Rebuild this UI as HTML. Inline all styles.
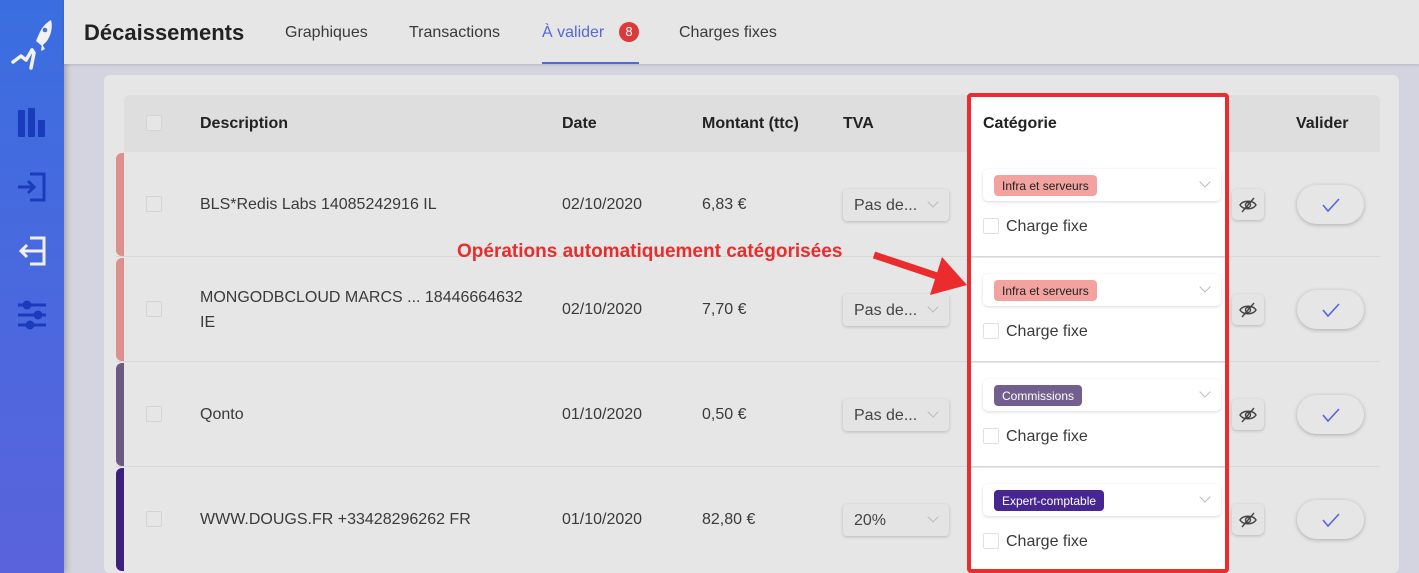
<!DOCTYPE html>
<html><head><meta charset="utf-8"><style>
*{box-sizing:border-box;margin:0;padding:0}
body{width:1419px;height:573px;overflow:hidden;background:#d3d4df;font-family:"Liberation Sans",sans-serif;position:relative;color:#333}
.a{position:absolute}
#side{left:0;top:0;width:64px;height:573px;background:linear-gradient(#3a6ee0,#5a63dc);box-shadow:2px 0 6px rgba(0,0,0,.25)}
#hdr{left:64px;top:0;width:1355px;height:64px;background:#e6e6e6;box-shadow:0 1px 3px rgba(0,0,0,.15)}
.tab{top:24px;font-size:16px;color:#3a3a3a}
#card{left:104px;top:75px;width:1295px;height:498px;background:#e6e6e6;border-radius:6px}
#thead{left:124px;top:95px;width:1256px;height:57px;background:#dedede;border-radius:6px 6px 0 0}
.th{top:115px;font-size:16px;font-weight:bold;color:#222}
.cb{width:16px;height:16px;border:1px solid #d4d4d4;background:#e6e6e6;border-radius:2px}
.row{left:116px;width:1264px;height:105px;border-bottom:1px solid #d8d8d8}
.bar{left:116px;width:8px;height:103px;border-radius:6px 0 0 6px}
.td{font-size:16px;color:#3a3a3a}
.sel{width:106px;height:32px;background:#e4e4e4;border-radius:4px;box-shadow:0 1px 3px rgba(0,0,0,.2);font-size:16px;padding:8px 0 0 11px;color:#444}
.chev{position:absolute;right:12px;top:9px;width:8px;height:8px;border-right:1px solid #bbb;border-bottom:1px solid #bbb;transform:rotate(45deg)}
.cat{left:983px;width:238px;height:32px;background:#fff;border-radius:5px;box-shadow:0 1px 3px rgba(0,0,0,.15)}
.chip{position:absolute;left:11px;top:6px;height:21px;border-radius:4px;font-size:12px;padding:4px 8px 0}
.eye{left:1232px;width:32px;height:31px;background:#e4e4e4;border-radius:5px;box-shadow:0 1px 3px rgba(0,0,0,.2)}
.ok{left:1297px;width:67px;height:39px;background:#e6e6e6;border-radius:20px;box-shadow:0 1px 4px rgba(0,0,0,.25)}
</style></head><body>
<div id="side" class="a">
<svg class="a" style="left:10px;top:18px" width="44" height="54" viewBox="0 0 44 54"><path d="M41 2c2 7 0 15-4 21l-5 5-6-5 3-7c3-7 7-11 12-14z" fill="#f2f2f2"/><circle cx="35" cy="12" r="2.3" fill="#4270e0"/><path d="M32 26l3 5-4 2z" fill="#f2f2f2"/><path d="M3 44l8-6 5 4 6-10" stroke="#f2f2f2" stroke-width="3.5" fill="none" stroke-linejoin="round" stroke-linecap="round"/><path d="M22 32l2 3-3 15" stroke="#f2f2f2" stroke-width="3.5" fill="none" stroke-linecap="round"/></svg>
<svg class="a" style="left:17px;top:108px" width="30" height="29"><rect x="1" y="2" width="7" height="27" rx="1" fill="#1a3cbc"/><rect x="11" y="0" width="7" height="29" rx="1" fill="#1a3cbc"/><rect x="21" y="12" width="7" height="17" rx="1" fill="#1a3cbc"/></svg>
<svg class="a" style="left:17px;top:172px" width="30" height="30" fill="none" stroke="#1a3cbc" stroke-width="3"><path d="M13 2h14v26H13M1 15h16M11 9l6 6-6 6"/></svg>
<svg class="a" style="left:17px;top:236px" width="30" height="30" fill="none" stroke="#f0f0f0" stroke-width="3"><path d="M13 2h14v26H13M26 15H5M10 9l-6 6 6 6"/></svg>
<svg class="a" style="left:17px;top:300px" width="30" height="30" stroke="#1a3cbc" stroke-width="3"><path d="M1 5h28M1 15h28M1 25h28"/><circle cx="10" cy="5" r="3" fill="#1a3cbc"/><circle cx="21" cy="15" r="3" fill="#1a3cbc"/><circle cx="13" cy="25" r="3" fill="#1a3cbc"/></svg>
</div>
<div id="hdr" class="a"></div>
<div class="a" style="left:84px;top:20px;font-size:22px;font-weight:bold;color:#222">Décaissements</div>
<div class="a tab" style="left:285px">Graphiques</div>
<div class="a tab" style="left:409px">Transactions</div>
<div class="a tab" style="left:542px;color:#5468d8">À valider</div>
<div class="a" style="left:619px;top:22px;width:20px;height:20px;border-radius:50%;background:#d93a3a;color:#fff;font-size:13px;text-align:center;line-height:20px">8</div>
<div class="a" style="left:542px;top:62px;width:97px;height:2px;background:#5468d8"></div>
<div class="a tab" style="left:679px">Charges fixes</div>
<div id="card" class="a"></div>
<div id="thead" class="a"></div>
<div class="a cb" style="left:146px;top:115px"></div>
<div class="a th" style="left:200px">Description</div>
<div class="a th" style="left:562px">Date</div>
<div class="a th" style="left:702px">Montant (ttc)</div>
<div class="a th" style="left:843px">TVA</div>
<div class="a th" style="left:1296px">Valider</div>
<div class="a" style="left:971px;top:97px;width:254px;height:473px;background:#fff"></div>
<div class="a th" style="left:983px">Catégorie</div>

<div class="a row" style="top:152px"></div><div class="a bar" style="top:153px;background:#dc8f8d"></div>
<div class="a row" style="top:257px"></div><div class="a bar" style="top:258px;background:#dc8f8d"></div>
<div class="a row" style="top:362px"></div><div class="a bar" style="top:363px;background:#6c5b80"></div>
<div class="a row" style="top:467px;border:none"></div><div class="a bar" style="top:468px;background:#3e1f7c"></div>
<div class="a" style="left:971px;top:257px;width:254px;height:1px;background:#e6e6e6"></div>
<div class="a" style="left:971px;top:362px;width:254px;height:1px;background:#e6e6e6"></div>
<div class="a" style="left:971px;top:467px;width:254px;height:1px;background:#e6e6e6"></div>

<div class="a cb" style="left:146px;top:196px"></div>
<div class="a td" style="left:200px;top:196px">BLS*Redis Labs 14085242916 IL</div>
<div class="a td" style="left:562px;top:196px">02/10/2020</div>
<div class="a td" style="left:702px;top:196px">6,83 €</div>
<div class="a sel" style="left:843px;top:189px">Pas de...<span class="chev"></span></div>

<div class="a cb" style="left:146px;top:301px"></div>
<div class="a td" style="left:200px;top:285px;line-height:25px">MONGODBCLOUD MARCS ... 18446664632<br>IE</div>
<div class="a td" style="left:562px;top:301px">02/10/2020</div>
<div class="a td" style="left:702px;top:301px">7,70 €</div>
<div class="a sel" style="left:843px;top:294px">Pas de...<span class="chev"></span></div>

<div class="a cb" style="left:146px;top:406px"></div>
<div class="a td" style="left:200px;top:406px">Qonto</div>
<div class="a td" style="left:562px;top:406px">01/10/2020</div>
<div class="a td" style="left:702px;top:406px">0,50 €</div>
<div class="a sel" style="left:843px;top:399px">Pas de...<span class="chev"></span></div>

<div class="a cb" style="left:146px;top:511px"></div>
<div class="a td" style="left:200px;top:511px">WWW.DOUGS.FR +33428296262 FR</div>
<div class="a td" style="left:562px;top:511px">01/10/2020</div>
<div class="a td" style="left:702px;top:511px">82,80 €</div>
<div class="a sel" style="left:843px;top:504px">20%<span class="chev"></span></div>

<div class="a cat" style="top:169px"><span class="chip" style="background:#f2a29f;color:#222">Infra et serveurs</span><span class="chev"></span></div>
<div class="a cat" style="top:274px"><span class="chip" style="background:#f2a29f;color:#222">Infra et serveurs</span><span class="chev"></span></div>
<div class="a cat" style="top:379px"><span class="chip" style="background:#735f8f;color:#fff">Commissions</span><span class="chev"></span></div>
<div class="a cat" style="top:484px"><span class="chip" style="background:#482692;color:#fff">Expert-comptable</span><span class="chev"></span></div>

<div class="a cb" style="left:983px;top:218px;background:#fff;border-color:#e0e0e0"></div><div class="a td" style="left:1006px;top:218px">Charge fixe</div>
<div class="a cb" style="left:983px;top:323px;background:#fff;border-color:#e0e0e0"></div><div class="a td" style="left:1006px;top:323px">Charge fixe</div>
<div class="a cb" style="left:983px;top:428px;background:#fff;border-color:#e0e0e0"></div><div class="a td" style="left:1006px;top:428px">Charge fixe</div>
<div class="a cb" style="left:983px;top:533px;background:#fff;border-color:#e0e0e0"></div><div class="a td" style="left:1006px;top:533px">Charge fixe</div>

<svg width="0" height="0" style="position:absolute"><symbol id="eye" viewBox="0 0 20 16"><path d="M2 8c3-5 13-5 16 0c-3 5-13 5-16 0z" fill="none" stroke="#444" stroke-width="1.4"/><circle cx="10" cy="8" r="2.5" fill="none" stroke="#444" stroke-width="1.4"/><path d="M4 15L16 1" stroke="#444" stroke-width="1.4"/></symbol><symbol id="chk" viewBox="0 0 20 16"><path d="M2 8l5 6L18 2" fill="none" stroke="#5468d8" stroke-width="1.6"/></symbol></svg>
<div class="a eye" style="top:189px"><svg style="margin:8px 6px" width="20" height="16"><use href="#eye"/></svg></div>
<div class="a eye" style="top:294px"><svg style="margin:8px 6px" width="20" height="16"><use href="#eye"/></svg></div>
<div class="a eye" style="top:399px"><svg style="margin:8px 6px" width="20" height="16"><use href="#eye"/></svg></div>
<div class="a eye" style="top:504px"><svg style="margin:8px 6px" width="20" height="16"><use href="#eye"/></svg></div>
<div class="a ok" style="top:185px"><svg style="margin:12px 24px" width="20" height="16"><use href="#chk"/></svg></div>
<div class="a ok" style="top:290px"><svg style="margin:12px 24px" width="20" height="16"><use href="#chk"/></svg></div>
<div class="a ok" style="top:395px"><svg style="margin:12px 24px" width="20" height="16"><use href="#chk"/></svg></div>
<div class="a ok" style="top:500px"><svg style="margin:12px 24px" width="20" height="16"><use href="#chk"/></svg></div>

<div class="a" style="left:967px;top:93px;width:262px;height:480px;border:4px solid #ea2c2c;border-radius:4px"></div>
<div class="a" style="left:457px;top:241px;font-size:19px;font-weight:bold;color:#ea2c2c">Opérations automatiquement catégorisées</div>
<svg class="a" style="left:870px;top:245px" width="100" height="52"><path d="M4 10L70 32" stroke="#ea2c2c" stroke-width="7"/><path d="M60 50L97 40L72 12z" fill="#ea2c2c"/></svg>
</body></html>
